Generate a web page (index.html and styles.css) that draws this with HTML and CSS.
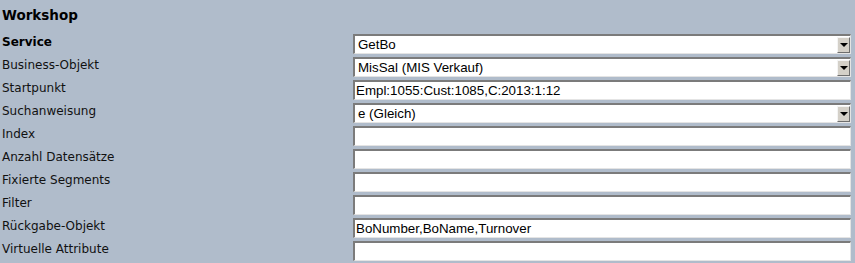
FILE: index.html
```html
<!DOCTYPE html>
<html lang="de">

<head>
     <meta charset="UTF-8">
     <title>Workshop</title>
     <link rel="stylesheet" href="styles.css">
</head>

<body>

     <h1 class="title">Workshop</h1>

     <div class="form">
          <div class="label strong">Service</div>
          <div class="field select"><span class="value">GetBo</span><span class="drop"></span></div>

          <div class="label">Business-Objekt</div>
          <div class="field select"><span class="value">MisSal (MIS Verkauf)</span><span class="drop"></span></div>

          <div class="label">Startpunkt</div>
          <div class="field"><span class="value">Empl:1055:Cust:1085,C:2013:1:12</span></div>

          <div class="label">Suchanweisung</div>
          <div class="field select"><span class="value">e (Gleich)</span><span class="drop"></span></div>

          <div class="label">Index</div>
          <div class="field"></div>

          <div class="label">Anzahl Datensätze</div>
          <div class="field"></div>

          <div class="label">Fixierte Segments</div>
          <div class="field"></div>

          <div class="label">Filter</div>
          <div class="field"></div>

          <div class="label">Rückgabe-Objekt</div>
          <div class="field"><span class="value">BoNumber,BoName,Turnover</span></div>

          <div class="label">Virtuelle Attribute</div>
          <div class="field"></div>
     </div>

</body>

</html>
```

FILE: styles.css
```css
:root {
     --bg: #b0bccb;
     --text: #000;
     --btn: #d4d0c8;
}

* {
     box-sizing: border-box;
     margin: 0;
     padding: 0;
}

body {
     font-family: 'DejaVu Sans', Verdana, sans-serif;
     font-size: 12px;
     background-color: var(--bg);
     color: var(--text);
     padding: 0 4px 0 2px;
     height: 100vh;
     overflow: hidden;
}

.title {
     font-size: 13.5px;
     font-weight: bold;
     line-height: 18px;
     padding-top: 6px;
     height: 34px;
}

.form {
     display: grid;
     grid-template-columns: 351px 498px;
     grid-auto-rows: 23px;
}

.label {
     line-height: 14px;
     padding-top: 1px;
     color: #111;
}

.label.strong {
     font-weight: bold;
     font-size: 12px;
     color: #000;
}

.field {
     display: flex;
     align-items: center;
     height: 20px;
     background: white;
     border-top: 2px solid #7b7b7b;
     border-left: 2px solid #7b7b7b;
     border-bottom: 1px solid #e4e4e4;
     border-right: 1px solid #e4e4e4;
     font-family: 'Liberation Sans', Arial, sans-serif;
     font-size: 13.33px;
}

.value {
     flex: 1;
     padding-left: 1px;
     white-space: nowrap;
}

.select .value {
     padding-left: 3px;
}

.drop {
     width: 13px;
     height: 16px;
     background: var(--btn);
     border-top: 1px solid #f4f4f4;
     border-left: 1px solid #f4f4f4;
     border-bottom: 1px solid #6e6e6e;
     border-right: 1px solid #6e6e6e;
     display: flex;
     align-items: center;
     justify-content: center;
}

.drop::after {
     content: "";
     border-left: 4px solid transparent;
     border-right: 4px solid transparent;
     border-top: 4px solid #000;
     margin-top: 1px;
}
```
